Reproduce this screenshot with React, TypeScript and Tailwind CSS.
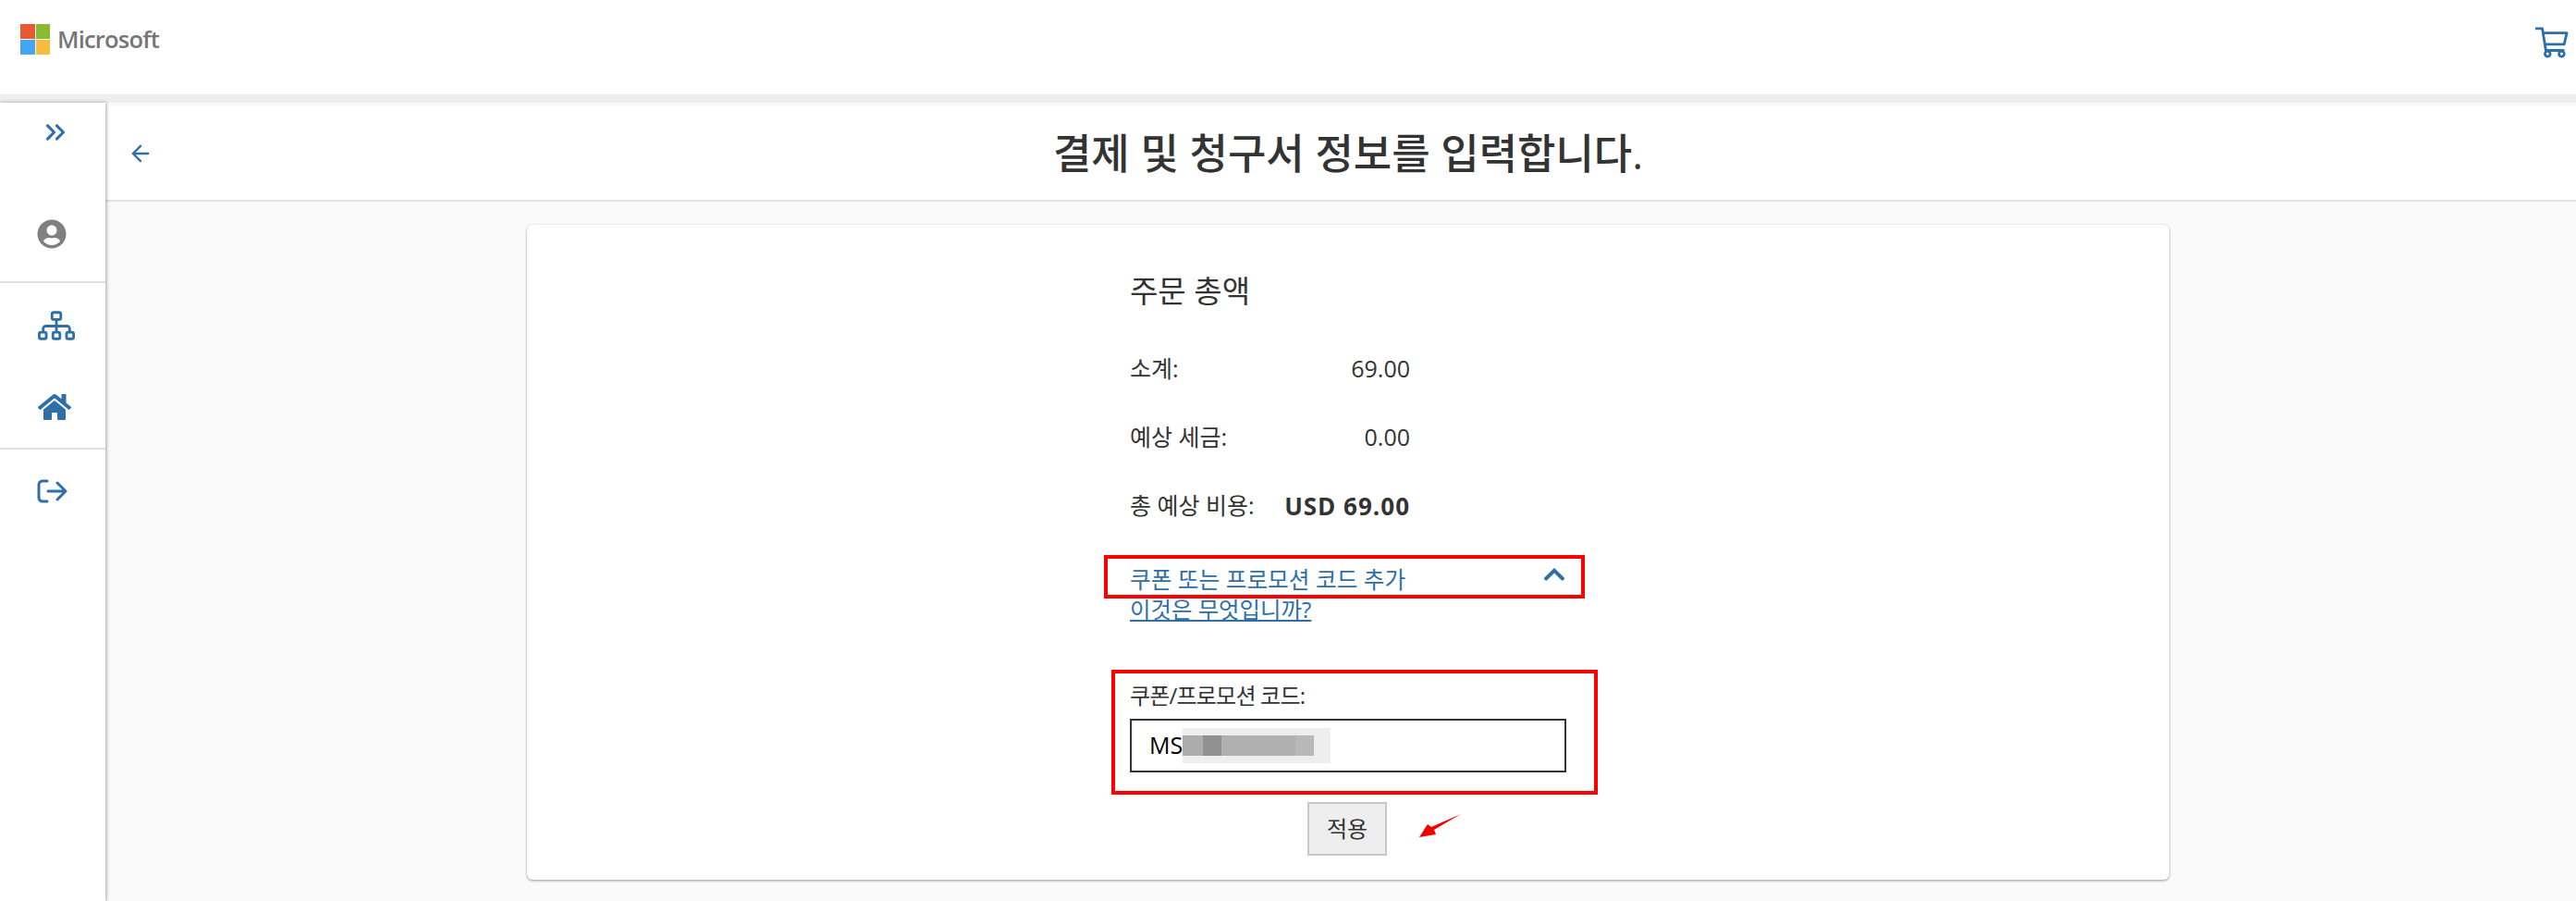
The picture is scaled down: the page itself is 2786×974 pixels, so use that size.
import { ArrowLeft, ChevronsRight } from "lucide-react";
import { FaChevronUp, FaHome, FaUserCircle } from "react-icons/fa";

const font = { fontFamily: '"Open Sans", "Noto Sans CJK KR", sans-serif' };

const Logo = () => (
  <div className="flex items-center gap-[8px]">
    <div className="grid w-[32px] h-[33px] grid-cols-2 gap-[1px]">
      <div className="bg-[#e65a32]" />
      <div className="bg-[#8cb932]" />
      <div className="bg-[#46a5f0]" />
      <div className="bg-[#f8bc3c]" />
    </div>
    <span className="text-[25.5px] font-semibold tracking-[-0.8px] text-[#767676]">Microsoft</span>
  </div>
);

const CartIcon = () => (
  <svg width="36" height="34" viewBox="0 0 38 36" fill="none" stroke="#2f6fa7" strokeWidth="3">
    <path d="M1 2h7l4 25h20" strokeLinecap="round" strokeLinejoin="round" />
    <path d="M9 7h27l-3 13H11" strokeLinejoin="round" />
    <circle cx="14" cy="31" r="3" />
    <circle cx="30" cy="31" r="3" />
  </svg>
);

const SitemapIcon = () => (
  <svg width="40" height="32" viewBox="0 0 42 33" fill="none" stroke="#2f6fa7" strokeWidth="3">
    <rect x="16" y="1.5" width="10" height="8" rx="2" />
    <path d="M21 10v14M6 24v-4a3 3 0 0 1 3-3h24a3 3 0 0 1 3 3v4" />
    <rect x="1.5" y="24" width="8" height="7.5" rx="2" />
    <rect x="17" y="24" width="8" height="7.5" rx="2" />
    <rect x="32.5" y="24" width="8" height="7.5" rx="2" />
  </svg>
);

const LogoutIcon = () => (
  <svg width="34" height="26" viewBox="0 0 34 26" fill="none" stroke="#2f6fa7" strokeWidth="3" strokeLinecap="round" strokeLinejoin="round">
    <path d="M11 2H6a4 4 0 0 0-4 4v14a4 4 0 0 0 4 4h5" />
    <path d="M12 13h19M22 4l9 9-9 9" />
  </svg>
);

const Row = ({ label, value, bold }: { label: string; value: string; bold?: boolean }) => (
  <div className="flex w-[303px] items-center justify-between h-[34px] mb-[40px] text-[25px] text-[#333]">
    <span>{label}</span>
    <span className={bold ? "text-[26px] font-bold tracking-[1px]" : ""}>{value}</span>
  </div>
);

const Sidebar = () => (
  <aside className="flex w-[114px] shrink-0 flex-col bg-white shadow-[1px_0_4px_rgba(0,0,0,0.35)] z-10">
    <div className="flex h-[195px] flex-col items-center border-b-2 border-[#e0e0e0]">
      <ChevronsRight size={34} strokeWidth={2.2} className="mt-[15px] ml-[6px] text-[#2f6fa7]" />
      <FaUserCircle size={32} className="mt-[77px] -ml-[2px] text-[#808080]" />
    </div>
    <div className="flex h-[180px] flex-col items-center border-b-2 border-[#e0e0e0]">
      <div className="mt-[30px] ml-[8px]"><SitemapIcon /></div>
      <FaHome size={36} className="mt-[54px] ml-[4px] text-[#2f6fa7]" />
    </div>
    <div className="mt-[32px] flex justify-center">
      <LogoutIcon />
    </div>
  </aside>
);

const Card = () => (
  <section className="ml-[456px] w-[1776px] h-[708px] mt-[25px] rounded-md bg-white shadow-[0_1px_3px_rgba(0,0,0,0.4)] pl-[652px] pt-[50px]">
    <h2 className="text-[33px] font-normal leading-[44px] text-[#333] mb-[45px]">주문 총액</h2>
    <Row label="소계:" value="69.00" />
    <Row label="예상 세금:" value="0.00" />
    <Row label="총 예상 비용:" value="USD 69.00" bold />
    <div className="relative mt-[46px] flex w-[472px] items-center justify-between text-[24.7px] leading-[34px] text-[#2f6fa7]">
      <span>쿠폰 또는 프로모션 코드 추가</span>
      <FaChevronUp size={26} className="-mt-[12px] text-[#2f6fa7]" />
      <div className="absolute -left-[28px] -top-[10px] h-[47px] w-[520px] border-4 border-[#ff0000]" />
    </div>
    <a className="block text-[24.4px] leading-[34px] -mt-[2px] text-[#2f6fa7] underline">이것은 무엇입니까?</a>
    <div className="relative mt-[59px] w-[472px]">
      <label className="block text-[24px] tracking-[-0.8px] leading-[34px] text-[#333] mb-[8px]">쿠폰/프로모션 코드:</label>
      <div className="flex h-[58px] items-center border-2 border-[#333] pl-[19px] text-[25px] text-black">
        <span>MS</span>
        <div className="flex h-[38px] flex-col justify-center w-[160px] bg-[#eeeeee]">
          <div className="flex h-[22px]">
            <div className="w-[22px] bg-[#acacac]" />
            <div className="w-[20px] bg-[#909090]" />
            <div className="w-[80px] bg-[#b0b0b0]" />
            <div className="w-[20px] bg-[#b8b8b8]" />
          </div>
        </div>
      </div>
      <div className="absolute -left-[20px] -top-[11px] h-[135px] w-[526px] border-4 border-[#ff0000]" />
    </div>
    <div className="relative mt-[32px] ml-[192px] w-[86px]">
      <button className="h-[58px] w-[86px] border-2 border-[#c8c8c8] bg-[#eeeeee] text-[24px] text-[#333]">적용</button>
      <svg className="absolute left-[120px] top-[12px]" width="46" height="28" viewBox="0 0 46 28">
        <path d="M46 1 L17 18 L19 23 L1 26 L10 12 L14 15 Z" fill="#f00000" />
      </svg>
    </div>
  </section>
);

export default function App() {
  return (
    <div className="flex h-[974px] w-[2786px] flex-col overflow-hidden bg-[#fafafa]" style={font}>
      <header className="flex h-[102px] shrink-0 items-start justify-between bg-white pl-[22px] pr-[8px] pt-[23px]">
        <Logo />
        <div className="mt-[6px]"><CartIcon /></div>
      </header>
      <div className="h-[9px] shrink-0 bg-[#eeeeee]" />
      <div className="flex flex-1">
        <Sidebar />
        <main className="flex-1">
          <div className="mt-[4px] flex h-[103px] items-center border-b-2 border-[#e2e2e2] bg-white pl-[24px]">
            <ArrowLeft size={28} strokeWidth={2} className="shrink-0 text-[#2f6fa7]" />
            <h1 className="flex-1 pr-[36px] text-center text-[45px] font-medium text-[#333]">결제 및 청구서 정보를 입력합니다.</h1>
          </div>
          <Card />
        </main>
      </div>
    </div>
  );
}
